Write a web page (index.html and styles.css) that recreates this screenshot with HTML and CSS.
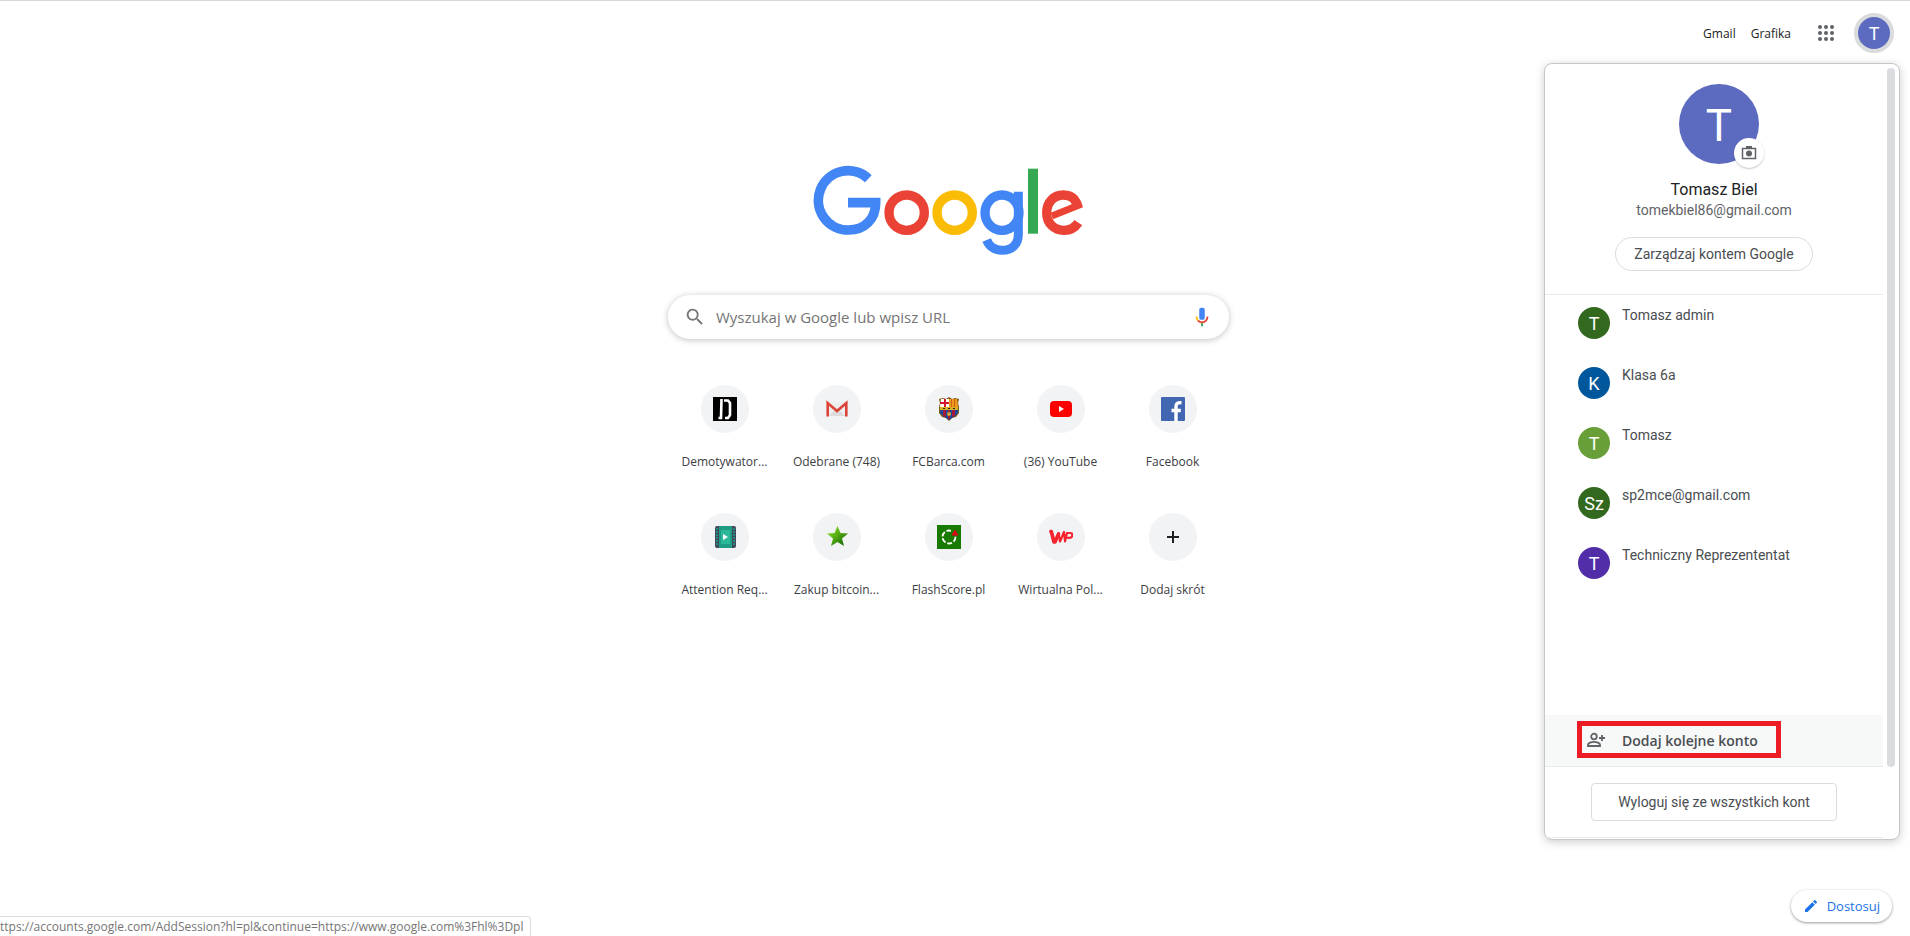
FILE: index.html
```
<!DOCTYPE html>
<html lang="pl">
<head>
    <meta charset="UTF-8">
    <meta name="viewport" content="width=device-width, initial-scale=1.0">
    <title>Nowa karta</title>
    <link rel="stylesheet" href="styles.css">
</head>
<body>
    <header class="topbar">
        <a href="#" class="topbar-link">Gmail</a>
        <a href="#" class="topbar-link">Grafika</a>
        <button class="apps" aria-label="Aplikacje Google">
            <svg width="16" height="16" viewBox="0 0 16 16" fill="#5f6368">
                <circle cx="2" cy="2" r="2"/><circle cx="8" cy="2" r="2"/><circle cx="14" cy="2" r="2"/>
                <circle cx="2" cy="8" r="2"/><circle cx="8" cy="8" r="2"/><circle cx="14" cy="8" r="2"/>
                <circle cx="2" cy="14" r="2"/><circle cx="8" cy="14" r="2"/><circle cx="14" cy="14" r="2"/>
            </svg>
        </button>
        <button class="account" aria-label="Konto Google">T</button>
    </header>

    <main class="content">
        <svg class="logo" viewBox="66 43 816 276" role="img" aria-label="Google" fill="none">
            <path d="M232 84A89 89 0 1 0 172 238C222 238 254 204 254 156H171" stroke="#4285f4" stroke-width="29"/>
            <ellipse cx="347" cy="186" rx="53" ry="53" stroke="#ea4335" stroke-width="28"/>
            <ellipse cx="491" cy="186" rx="53" ry="53" stroke="#fbbc05" stroke-width="28"/>
            <ellipse cx="633" cy="186" rx="51" ry="53" stroke="#4285f4" stroke-width="28"/>
            <path d="M682 123V250C682 283 662 299 633 299C610 299 594 286 587 268" stroke="#4285f4" stroke-width="27"/>
            <rect x="711" y="54" width="30" height="195" fill="#34a853"/>
            <path d="M862 216C852 231 838 239 819 239C790 239 767 218 767 186C767 155 788 133 817 133C832 133 843 138 851 147" stroke="#ea4335" stroke-width="28"/>
            <path d="M860 136L870 152L876 170L786 206L779 186L842 161L838 152Z" fill="#ea4335"/>
        </svg>

        <form class="search">
            <svg width="22" height="22" viewBox="0 0 24 24" fill="#757575">
                <path d="M15.500 14h-.8l-.3-.3A6.500 6.500 0 1 0 13.700 14.400l.3.3v.8l5 5 1.500-1.500-5-5zm-6 0a4.500 4.500 0 1 1 0-9 4.500 4.500 0 0 1 0 9z"/>
            </svg>
            <input type="text" class="search-input" placeholder="Wyszukaj w Google lub wpisz URL" aria-label="Wyszukaj w Google lub wpisz URL">
            <button type="button" class="mic" aria-label="Wyszukiwanie głosowe">
                <svg width="22" height="22" viewBox="0 0 24 24">
                    <rect x="9" y="2" width="6" height="13" rx="2" fill="#4285f4"/>
                    <path d="M11 18h2v4h-2z" fill="#34a853"/>
                    <path d="M6 11.500c0 2 .7 3.500 1.900 4.700" fill="none" stroke="#fbbc05" stroke-width="2"/>
                    <path d="M7.600 15.900c2.400 2.500 6.400 2.500 8.800 0 1.100-1.200 1.600-2.700 1.600-4.400" fill="none" stroke="#ea4335" stroke-width="2"/>
                </svg>
            </button>
        </form>

        <nav class="tiles">
            <a href="#" class="tile">
                <span class="tile-icon">
                    <svg width="24" height="24" viewBox="0 0 24 24">
                        <rect width="24" height="24"/>
                        <path d="M8.500 2L8 21H5.500M11 3.500h4L17 6v12l-2 3h-3" fill="none" stroke="#fff" stroke-width="2.600"/>
                    </svg>
                </span>
                <span class="tile-title">Demotywator...</span>
            </a>
            <a href="#" class="tile">
                <span class="tile-icon">
                    <svg width="24" height="24" viewBox="0 0 24 24">
                        <path d="M2 5h20v14H2z" fill="#eee"/>
                        <path d="M4 19l8-8 8 8z" fill="#dcdcdc"/>
                        <path d="M2.700 19.500V6l9.300 8 9.300-8v13.500" fill="none" stroke="#db4437" stroke-width="2.600"/>
                    </svg>
                </span>
                <span class="tile-title">Odebrane (748)</span>
            </a>
            <a href="#" class="tile">
                <span class="tile-icon">
                    <svg width="24" height="24" viewBox="0 0 24 24">
                        <path d="M2 2l4-1 3 1 3-2 3 2 3-1 4 1-1 4 1 4v6l-3 4-4 1-3 3-3-3-4-1-3-4v-6l1-4z" fill="#7a5c14"/>
                        <path d="M4 2h8v8H3z" fill="#fff"/>
                        <path d="M7 2h2v8H7zM3 5h9v2H3z" fill="#d4142a"/>
                        <path d="M12 2h8l1 8h-9z" fill="#f09a1a"/>
                        <path d="M14 2h1v8h-1zM17 2h1v8h-1z" fill="#c8601c"/>
                        <path d="M3 10h18v3H3z" fill="#d9ae24"/>
                        <path d="M6 11h2v1H6zM11 11h2v1h-2zM16 11h2v1h-2z" fill="#222"/>
                        <path d="M3 13h18v3l-3 3-6 4-6-4-3-3z" fill="#174a9b"/>
                        <path d="M6 13h3v7l-3-1zM15 13h3v6l-3 1zM11 13h2v9h-2z" fill="#a51840"/>
                        <circle cx="12" cy="17" r="2" fill="#d7a62a"/>
                    </svg>
                </span>
                <span class="tile-title">FCBarca.com</span>
            </a>
            <a href="#" class="tile">
                <span class="tile-icon">
                    <svg width="24" height="24" viewBox="0 0 24 24">
                        <rect x="1" y="4" width="22" height="16" rx="4" fill="#f00"/>
                        <path d="M10 9l5 3-5 3z" fill="#fff"/>
                    </svg>
                </span>
                <span class="tile-title">(36) YouTube</span>
            </a>
            <a href="#" class="tile">
                <span class="tile-icon">
                    <svg width="24" height="24" viewBox="0 0 24 24">
                        <rect width="24" height="24" rx="1" fill="#4267b2"/>
                        <path d="M15 24V9.500C15 6.500 16.500 5.500 20.500 5.700M10.500 13.500h9.300" fill="none" stroke="#fff" stroke-width="3.400"/>
                    </svg>
                </span>
                <span class="tile-title">Facebook</span>
            </a>
            <a href="#" class="tile">
                <span class="tile-icon">
                    <svg width="24" height="24" viewBox="0 0 24 24">
                        <rect x="2" y="1" width="21" height="22" rx="2" fill="#42495c"/>
                        <rect x="6" y="1" width="13" height="22" fill="#1f9d84"/>
                        <rect x="8" y="5" width="9" height="14" fill="#2cb89a"/>
                        <path d="M4 3v18M21 3v18" stroke="#218c7b" stroke-width="2" stroke-dasharray="2 1"/>
                        <path d="M10 9l5 3-5 3z" fill="#fff"/>
                    </svg>
                </span>
                <span class="tile-title">Attention Req...</span>
            </a>
            <a href="#" class="tile">
                <span class="tile-icon">
                    <svg width="24" height="24" viewBox="0 0 24 24">
                        <defs>
                            <linearGradient id="star" x1="0" y1="0" x2="1" y2="1">
                                <stop offset="0.200" stop-color="#7ed321"/>
                                <stop offset="0.800" stop-color="#237804"/>
                            </linearGradient>
                        </defs>
                        <path d="M12.500 1l3 7 7.500.5-6 5 2 7.500-6.500-4-6.500 4 2-7.500-6-5L9.500 8z" fill="url(#star)"/>
                    </svg>
                </span>
                <span class="tile-title">Zakup bitcoin...</span>
            </a>
            <a href="#" class="tile">
                <span class="tile-icon">
                    <svg width="24" height="24" viewBox="0 0 24 24">
                        <rect width="24" height="24" fill="#187a00"/>
                        <circle cx="12" cy="12" r="6.500" fill="none" stroke="#fff" stroke-width="1.800" stroke-dasharray="5 1.800"/>
                        <path d="M14 4h7v7h-7z" fill="#187a00"/>
                        <path d="M18 4.500l3.500 6h-7z" fill="#e4001b"/>
                    </svg>
                </span>
                <span class="tile-title">FlashScore.pl</span>
            </a>
            <a href="#" class="tile">
                <span class="tile-icon">
                    <svg width="24" height="24" viewBox="0 0 24 24" fill="none" stroke="#f6222d" stroke-linecap="round" stroke-linejoin="round">
                        <path d="M1.800 6.500h.5l2.700 10.500h1l3.500-8" stroke-width="3.600"/>
                        <path d="M9.500 8l1.500 8.500 4-9.500 1 9.500 2-8.500h3q2.500 0 2.300 2.300-.3 2.500-3 2.500h-1.500" stroke-width="2.200"/>
                    </svg>
                </span>
                <span class="tile-title">Wirtualna Pol...</span>
            </a>
            <a href="#" class="tile">
                <span class="tile-icon">
                    <svg width="24" height="24" viewBox="0 0 24 24">
                        <path d="M6 12h12M12 6v12" stroke="#202124" stroke-width="2"/>
                    </svg>
                </span>
                <span class="tile-title">Dodaj skrót</span>
            </a>
        </nav>
    </main>

    <section class="menu">
        <div class="menu-body">
            <div class="profile">
                <div class="photo">
                    T
                    <button class="photo-edit" aria-label="Zmień zdjęcie profilowe">
                        <svg width="16" height="16" viewBox="0 0 16 16">
                            <path d="M1.500 3.500h13v10h-13z" fill="none" stroke="#5f6368" stroke-width="1.500"/>
                            <path d="M5 1h6v3H5z" fill="#5f6368"/>
                            <circle cx="8" cy="8.500" r="3" fill="#5f6368"/>
                        </svg>
                    </button>
                </div>
                <div class="name">Tomasz Biel</div>
                <div class="email">tomekbiel86@gmail.com</div>
                <a href="#" class="manage">Zarządzaj kontem Google</a>
            </div>
            <div class="accounts">
                <a href="#" class="row"><span class="avatar green">T</span>Tomasz admin</a>
                <a href="#" class="row"><span class="avatar blue">K</span>Klasa 6a</a>
                <a href="#" class="row"><span class="avatar lime">T</span>Tomasz</a>
                <a href="#" class="row"><span class="avatar green">Sz</span>sp2mce@gmail.com</a>
                <a href="#" class="row"><span class="avatar purple">T</span>Techniczny Reprezententat</a>
            </div>
            <a href="#" class="add">
                <svg width="20" height="20" viewBox="0 0 20 20" fill="none" stroke="#5f6368" stroke-width="1.800">
                    <circle cx="8" cy="5.500" r="2.800"/>
                    <path d="M2 15v-1.200c0-1.800 3.500-3 6-3s6 1.200 6 3V15zM13 7h6M16 4v6"/>
                </svg>
                <span>Dodaj kolejne konto</span>
                <span class="marker"></span>
            </a>
            <div class="signout">
                <button class="signout-button">Wyloguj się ze wszystkich kont</button>
            </div>
        </div>
        <div class="thumb"></div>
    </section>

    <button class="customize">
        <svg width="16" height="16" viewBox="0 0 24 24" fill="#1a73e8">
            <path d="M3 17.250V21h3.750L17.810 9.940l-3.750-3.750L3 17.250zM20.710 7.040a1 1 0 0 0 0-1.410l-2.340-2.340a1 1 0 0 0-1.410 0l-1.830 1.830 3.750 3.750 1.830-1.830z"/>
        </svg>
        Dostosuj
    </button>

    <div class="status">ttps://accounts.google.com/AddSession?hl=pl&amp;continue=https://www.google.com%3Fhl%3Dpl</div>
</body>
</html>
```
FILE: styles.css
```
* {
    box-sizing: border-box;
}
body {
    margin: 0;
    min-height: 100vh;
    border-top: 1px solid #d8d9dc;
    background-color: #fff;
    font-family: "Segoe UI", "Open Sans", sans-serif;
    font-size: 12px;
    color: #3c4043;
    overflow: hidden;
}
a {
    color: inherit;
    text-decoration: none;
}
button {
    padding: 0;
    border: none;
    background: none;
    font: inherit;
    color: inherit;
    cursor: pointer;
}
svg {
    display: block;
    flex: none;
}
.topbar {
    display: flex;
    justify-content: flex-end;
    align-items: center;
    height: 64px;
    padding-right: 16px;
}
.topbar-link {
    margin-right: 15px;
    color: #202124;
}
.apps {
    margin: 0 20px 0 12px;
}
.account {
    width: 40px;
    height: 40px;
    border: 4px solid #dadbdd;
    border-radius: 50%;
    background-color: #5c6bc0;
    color: #fff;
    font-family: Roboto, sans-serif;
    font-size: 18px;
}
.content {
    display: flex;
    flex-direction: column;
    align-items: center;
    padding: 100px 13px 0 0;
}
.logo {
    width: 272px;
    height: 92px;
}
.search {
    display: flex;
    align-items: center;
    width: 561px;
    height: 44px;
    margin-top: 38px;
    padding: 0 16px;
    border-radius: 22px;
    box-shadow: 0 1px 6px rgba(32, 33, 36, 0.28);
}
.search-input {
    flex: 1;
    padding: 0 0 0 10px;
    border: none;
    outline: none;
    font: inherit;
    font-size: 15px;
}
.search-input::placeholder {
    color: #757575;
}
.tiles {
    display: grid;
    grid-template-columns: repeat(5, 112px);
    margin-top: 30px;
}
.tile {
    display: flex;
    flex-direction: column;
    align-items: center;
    height: 128px;
    padding-top: 16px;
}
.tile-icon {
    display: flex;
    justify-content: center;
    align-items: center;
    width: 48px;
    height: 48px;
    border-radius: 50%;
    background-color: #f1f3f4;
}
.tile-title {
    margin-top: 20px;
    line-height: 18px;
    white-space: nowrap;
}
.menu {
    position: absolute;
    top: 63px;
    right: 10px;
    display: flex;
    width: 356px;
    border: 1px solid #c6c7c9;
    border-radius: 8px;
    background-color: #fff;
    box-shadow: 0 2px 10px rgba(0, 0, 0, 0.2);
    font-family: Roboto, sans-serif;
    font-size: 14px;
    color: #4a4d51;
}
.menu-body {
    flex: 1;
    padding-bottom: 1px;
}
.thumb {
    width: 8px;
    height: 699px;
    margin: 4px 4px 0;
    border-radius: 4px;
    background-color: #dadce0;
}
.profile {
    display: flex;
    flex-direction: column;
    align-items: center;
    padding: 20px 0 23px;
    border-bottom: 1px solid #e8eaed;
}
.photo {
    position: relative;
    width: 80px;
    height: 80px;
    margin-left: 10px;
    border-radius: 50%;
    background-color: #5c6bc0;
    color: #fff;
    font-size: 44px;
    line-height: 84px;
    text-align: center;
}
.photo-edit {
    position: absolute;
    right: -5px;
    bottom: -4px;
    display: flex;
    justify-content: center;
    align-items: center;
    width: 30px;
    height: 30px;
    border-radius: 50%;
    background-color: #fff;
    box-shadow: 0 1px 2px rgba(60, 64, 67, 0.3);
}
.name {
    margin-top: 16px;
    font-size: 16px;
    line-height: 20px;
    color: #202124;
}
.email {
    line-height: 20px;
    color: #5f6368;
}
.manage {
    margin-top: 17px;
    padding: 0 18px;
    border: 1px solid #dadce0;
    border-radius: 17px;
    line-height: 32px;
}
.accounts {
    min-height: 420px;
}
.row {
    display: flex;
    height: 60px;
    padding: 10px 0 0 33px;
    line-height: 20px;
}
.avatar {
    width: 32px;
    height: 32px;
    margin: 2px 12px 0 0;
    border-radius: 50%;
    color: #fff;
    font-size: 18px;
    line-height: 33px;
    text-align: center;
}
.green {
    background-color: #33691e;
}
.blue {
    background-color: #01579b;
}
.lime {
    background-color: #689f38;
}
.purple {
    background-color: #512da8;
}
.add {
    position: relative;
    display: flex;
    align-items: center;
    gap: 16px;
    height: 52px;
    padding-left: 41px;
    border-bottom: 1px solid #e8eaed;
    background-color: #f7f8f8;
    font-family: "Segoe UI", "Open Sans", sans-serif;
    font-weight: 600;
}
/* red frame over the add account row */
.marker {
    position: absolute;
    top: 6px;
    left: 32px;
    width: 204px;
    height: 37px;
    border: 5px solid #ed1c24;
}
.signout {
    display: flex;
    justify-content: center;
    padding: 16px 0;
    border-bottom: 1px solid #e8eaed;
}
.signout-button {
    height: 38px;
    padding: 0 26px;
    border: 1px solid #dadce0;
    border-radius: 4px;
}
.customize {
    position: absolute;
    right: 18px;
    bottom: 14px;
    display: flex;
    align-items: center;
    gap: 8px;
    height: 32px;
    padding: 0 12px;
    border-radius: 16px;
    box-shadow: 0 1px 3px rgba(0, 0, 0, 0.4);
    color: #1a73e8;
    font-size: 13px;
}
.status {
    position: absolute;
    left: 0;
    bottom: 0;
    height: 20px;
    padding-right: 7px;
    border: 1px solid #dadce0;
    border-width: 1px 1px 0 0;
    border-top-right-radius: 4px;
    background-color: #fff;
    line-height: 20px;
    color: #757575;
    white-space: nowrap;
}
```
